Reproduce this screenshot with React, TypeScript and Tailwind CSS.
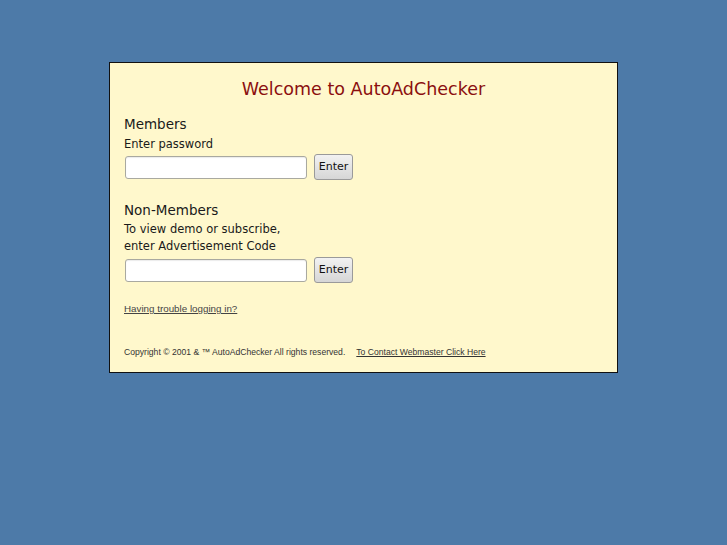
export default function App() {
  return (
    <div className="min-h-[545px] bg-[#4d7aa8] pt-[62px] font-['DejaVu_Sans',sans-serif]">
      <div className="ml-[109px] w-[509px] h-[311px] border border-[#111] bg-[#fff8cc] px-[14px] text-[#1a1a1a]">
        <h1 className="mt-[14px] text-center text-[17.5px] text-[#8b0f0f] leading-[24px]">
          Welcome to AutoAdChecker
        </h1>

        {/* Members login */}
        <div className="mt-[14px] text-[13.5px] leading-[18px]">Members</div>
        <div className="mt-[3px] text-[11.5px] leading-[16px]">Enter password</div>
        <div className="mt-[2px] flex items-center gap-[7px] pl-[1px]">
          <input
            type="password"
            className="w-[182px] h-[23px] rounded-[3px] border border-[#a9a9a0] bg-white shadow-[inset_0_1px_1px_rgba(0,0,0,0.08)]"
          />
          <button className="w-[39px] h-[26px] rounded-[3px] border border-[#9a9a9a] bg-gradient-to-b from-[#f2f2f2] to-[#d6d6d6] text-[11px] text-[#111]">
            Enter
          </button>
        </div>

        {/* Non-members code entry */}
        <div className="mt-[21px] text-[13.5px] leading-[18px]">Non-Members</div>
        <div className="mt-[2px] text-[11.5px] leading-[17px]">
          To view demo or subscribe,
          <br />
          enter Advertisement Code
        </div>
        <div className="mt-[2px] flex items-center gap-[7px] pl-[1px]">
          <input
            type="text"
            className="w-[182px] h-[23px] rounded-[3px] border border-[#a9a9a0] bg-white shadow-[inset_0_1px_1px_rgba(0,0,0,0.08)]"
          />
          <button className="w-[39px] h-[26px] rounded-[3px] border border-[#9a9a9a] bg-gradient-to-b from-[#f2f2f2] to-[#d6d6d6] text-[11px] text-[#111]">
            Enter
          </button>
        </div>

        <a
          href="#"
          className="mt-[20px] block text-[9.8px] leading-[12px] text-[#444] underline font-['Liberation_Sans',sans-serif]"
        >
          Having trouble logging in?
        </a>

        <div className="mt-[31px] flex text-[8.6px] leading-[12px] text-[#333] font-['Liberation_Sans',sans-serif]">
          <span>Copyright © 2001 &amp; ™ AutoAdChecker All rights reserved.</span>
          <a href="#" className="ml-[11px] underline text-[#333]">
            To Contact Webmaster Click Here
          </a>
        </div>
      </div>
    </div>
  );
}
